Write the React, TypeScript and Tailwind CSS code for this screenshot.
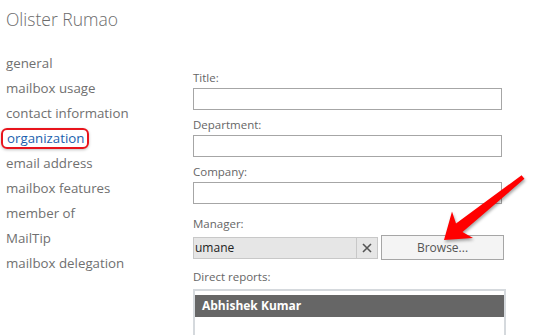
import React from "react";

const navItems = [
  "general",
  "mailbox usage",
  "contact information",
  "organization",
  "email address",
  "mailbox features",
  "member of",
  "MailTip",
  "mailbox delegation",
];

const font = { fontFamily: '"Open Sans", "Noto Sans", sans-serif' };

function Field({ label, first }: { label: string; first?: boolean }) {
  return (
    <div>
      <div className={`${first ? "" : "mt-[7px]"} mb-[2px] text-[11.5px] leading-[16px] text-[#666]`}>{label}</div>
      <div className="h-[22px] w-[309px] border border-[#a6a6a6] bg-white" />
    </div>
  );
}

export default function App() {
  return (
    <div className="relative h-[335px] w-[540px] overflow-hidden bg-white text-[#666]" style={font}>
      <h1 className="pl-[6px] pt-[6px] text-[17.5px] font-light leading-[26px] text-[#6b6b6b]">Olister Rumao</h1>

      <div className="flex pt-[19px]">
        <nav className="w-[193px] shrink-0 pl-[6px]">
          {navItems.map((item) => (
            <div key={item} className="flex h-[25px] items-center text-[13.3px]">
              {item === "organization" ? (
                <span className="-ml-[5px] flex h-[21px] items-center rounded-[6px] border-2 border-[#e8141c] pl-[4px] pr-[3px] text-[#1b5fae] shadow-[0_1px_3px_rgba(0,0,0,0.25)]">
                  {item}
                </span>
              ) : (
                <span className="text-[#707070]">{item}</span>
              )}
            </div>
          ))}
        </nav>

        <div className="pt-[19px]">
          <Field label="Title:" first />
          <Field label="Department:" />
          <Field label="Company:" />

          <div className="mt-[12px] mb-[3px] text-[11.5px] leading-[16px]">Manager:</div>
          <div className="flex items-center gap-[3px]">
            <div className="flex h-[22px] w-[185px] border border-[#c8c8c8] bg-[#e6e6e6]">
              <div className="flex flex-1 items-center pl-[1px] text-[12px] text-[#222]">umane</div>
              <div className="flex w-[21px] items-center justify-center border-l border-[#c8c8c8]">
                <svg width="10" height="10" viewBox="0 0 10 10">
                  <path d="M1 1L9 9M9 1L1 9" stroke="#555" strokeWidth="1.6" />
                </svg>
              </div>
            </div>
            <button className="flex h-[25px] w-[123px] items-center justify-center border border-[#a6a6a6] bg-[#f4f4f4] text-[12px] text-[#555]">
              Browse...
            </button>
          </div>

          <div className="mt-[9px] mb-[4px] text-[11.5px] leading-[16px]">Direct reports:</div>
          <div className="h-[60px] w-[313px] border-2 border-[#d5d9dd] pt-[4px]">
            <div className="flex h-[22px] items-center bg-[#666] pl-[7px] text-[12px] font-bold text-white">
              Abhishek Kumar
            </div>
          </div>
        </div>
      </div>

      <svg
        className="pointer-events-none absolute left-0 top-0"
        width="540"
        height="335"
        style={{ filter: "drop-shadow(1px 2px 1.5px rgba(0,0,0,0.35))" }}
      >
        <polygon
          points="524.4,178.8 462.5,232 473,238 444,240 452,211.5 456,223.6 521.6,175.2"
          fill="#f00"
        />
      </svg>
    </div>
  );
}
